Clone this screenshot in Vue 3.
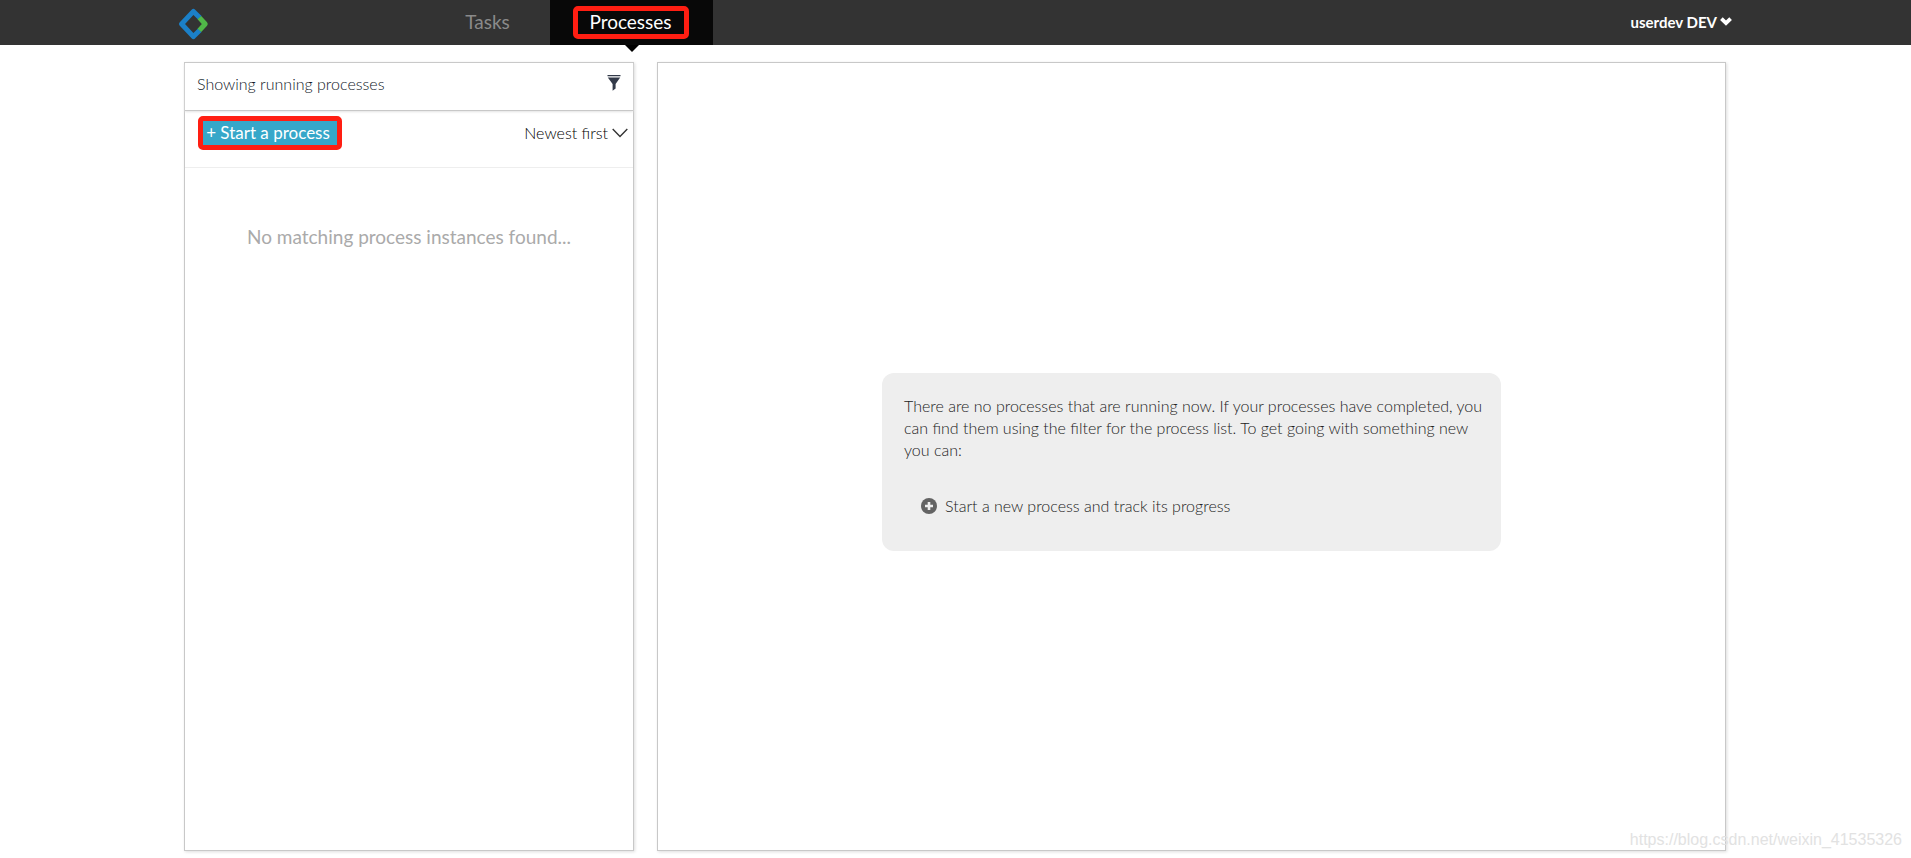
<script setup>
const user = 'userdev DEV'
</script>

<template>
  <div class="page">
    <header class="topbar">
      <div class="topbar-inner">
        <a class="logo" href="#" aria-label="Home">
          <svg width="30" height="32" viewBox="0 0 30 32" fill="none" stroke-width="5" aria-hidden="true">
            <path d="M20.8 9.8 L14.4 3.4 L2.6 16 L14.4 28.6 L20.8 22.2" stroke="#1b80c8" stroke-linejoin="round" />
            <path d="M20.4 9.6 L26.2 16 L20.4 22.4" stroke="#50b748" stroke-linejoin="round" />
          </svg>
        </a>
        <nav class="nav">
          <a class="tab" href="#tasks">Tasks</a>
          <a class="tab active" href="#processes" aria-current="page"><span class="mark">Processes</span></a>
        </nav>
        <button class="account" type="button">
          {{ user }}
          <svg width="12" height="9" viewBox="0 0 12 9" fill="none" aria-hidden="true">
            <path d="M1.4 1.6 L6 6 L10.6 1.6" stroke="#fff" stroke-width="3.8" />
          </svg>
        </button>
      </div>
    </header>

    <main class="content">
      <section class="panel list">
        <div class="list-head">
          <h1>Showing running processes</h1>
          <button class="filter" type="button" aria-label="Filter">
            <svg width="14" height="16" viewBox="0 0 14 16" aria-hidden="true">
              <path d="M0.5 0 H13.5 V1.2 H0.5 Z M0.8 2.6 H13.2 L8.6 9 V13.4 L5.6 15.8 V9 Z" fill="#333a49" />
            </svg>
          </button>
        </div>
        <div class="toolbar">
          <button class="start" type="button">+ Start a process</button>
          <button class="sort" type="button">
            Newest first
            <svg width="16" height="10" viewBox="0 0 16 10" fill="none" aria-hidden="true">
              <path d="M0.7 1 L8 8.4 L15.3 1" stroke="#333" stroke-width="1.4" />
            </svg>
          </button>
        </div>
        <p class="empty">No matching process instances found...</p>
      </section>

      <section class="panel detail">
        <div class="help">
          <p>There are no processes that are running now. If your processes have completed, you can find them using the filter for the process list. To get going with something new you can:</p>
          <a class="help-action" href="#start">
            <svg width="16" height="16" viewBox="0 0 16 16" aria-hidden="true">
              <circle cx="8" cy="8" r="8" fill="#636363" />
              <path d="M8 4 V12 M4 8 H12" stroke="#eee" stroke-width="2.6" />
            </svg>
            Start a new process and track its progress
          </a>
        </div>
      </section>
    </main>
    <span class="watermark">https://blog.csdn.net/weixin_41535326</span>
  </div>
</template>

<style>
body {
  margin: 0;
  background: #fff;
}
</style>

<style scoped>
.page {
  position: relative;
  display: flex;
  flex-direction: column;
  min-height: 100vh;
  box-sizing: border-box;
  padding-bottom: 7px;
  font-family: Lato, "Liberation Sans", sans-serif;
  font-size: 16px;
  line-height: 22px;
}
.page * {
  box-sizing: border-box;
}
button {
  margin: 0;
  padding: 0;
  border: 0;
  background: none;
  font: inherit;
  cursor: pointer;
}
a {
  text-decoration: none;
}
svg {
  display: block;
  flex: none;
}
.topbar {
  background: #333;
}
.topbar-inner {
  display: flex;
  height: 45px;
  padding: 0 179px;
}
.logo {
  width: 246px;
  padding-top: 8px;
}
.nav {
  display: flex;
  flex: 1;
}
.tab {
  position: relative;
  display: flex;
  align-items: center;
  justify-content: center;
  width: 125px;
  padding-bottom: 2px;
  color: #8a8a8a;
  font-size: 19px;
}
.tab.active {
  width: 163px;
  padding: 0 2px 0 0;
  background: #080808;
  color: #fff;
}
.tab.active::after {
  position: absolute;
  top: 100%;
  left: 50%;
  margin-left: -7px;
  border: 7px solid transparent;
  border-top-color: #000;
  border-bottom: 0;
  content: "";
}
.mark {
  display: flex;
  align-items: center;
  justify-content: center;
  width: 116px;
  height: 33px;
  padding-bottom: 2px;
  border: 5px solid #ff1e12;
  border-radius: 5px;
}
.account {
  display: flex;
  align-items: center;
  gap: 3px;
  height: 43px;
  color: #fff;
  font-size: 15px;
  font-weight: 700;
}
.content {
  display: flex;
  flex: 1;
  gap: 23px;
  padding: 17px 185px 0 184px;
}
.panel {
  border: 1px solid #c8c8c8;
  box-shadow: 1px 1px 3px #ddd;
}
.list {
  width: 450px;
}
.list-head {
  display: flex;
  justify-content: space-between;
  height: 48px;
  padding: 10px 12px;
  border-bottom: 1px solid #c8c8c8;
  box-shadow: 0 1px 2px #e4e4e4;
}
h1 {
  margin: 0;
  color: #101828;
  font-size: 16px;
  font-weight: 300;
}
.filter {
  height: 20px;
}
.toolbar {
  display: flex;
  justify-content: space-between;
  height: 57px;
  padding: 5px 5px 0 13px;
  border-bottom: 1px solid #eee;
}
.start {
  width: 144px;
  height: 34px;
  padding-right: 4px;
  border: 5px solid #ff1e12;
  border-radius: 5px;
  background: #36a7c9;
  color: #fff;
  font-size: 17px;
  white-space: nowrap;
}
.sort {
  display: flex;
  align-items: center;
  gap: 4px;
  height: 34px;
  color: #000;
  font-weight: 300;
}
.empty {
  margin: 55px 0 0;
  color: #aaa;
  font-size: 19px;
  line-height: 28px;
  text-align: center;
}
.detail {
  display: flex;
  flex: 1;
  align-items: center;
  justify-content: center;
}
.help {
  width: 619px;
  height: 178px;
  margin-top: 10px;
  padding: 22px 12px 22px 22px;
  border-radius: 12px;
  background: #eee;
  color: #222;
  font-weight: 300;
}
.help p {
  margin: 0;
}
.help-action {
  display: flex;
  align-items: center;
  gap: 8px;
  padding: 34px 0 0 17px;
  color: #222;
}
.watermark {
  position: absolute;
  right: 9px;
  bottom: 7px;
  color: #e2e2e2;
  font: 16px/22px "Liberation Sans", sans-serif;
}
</style>
